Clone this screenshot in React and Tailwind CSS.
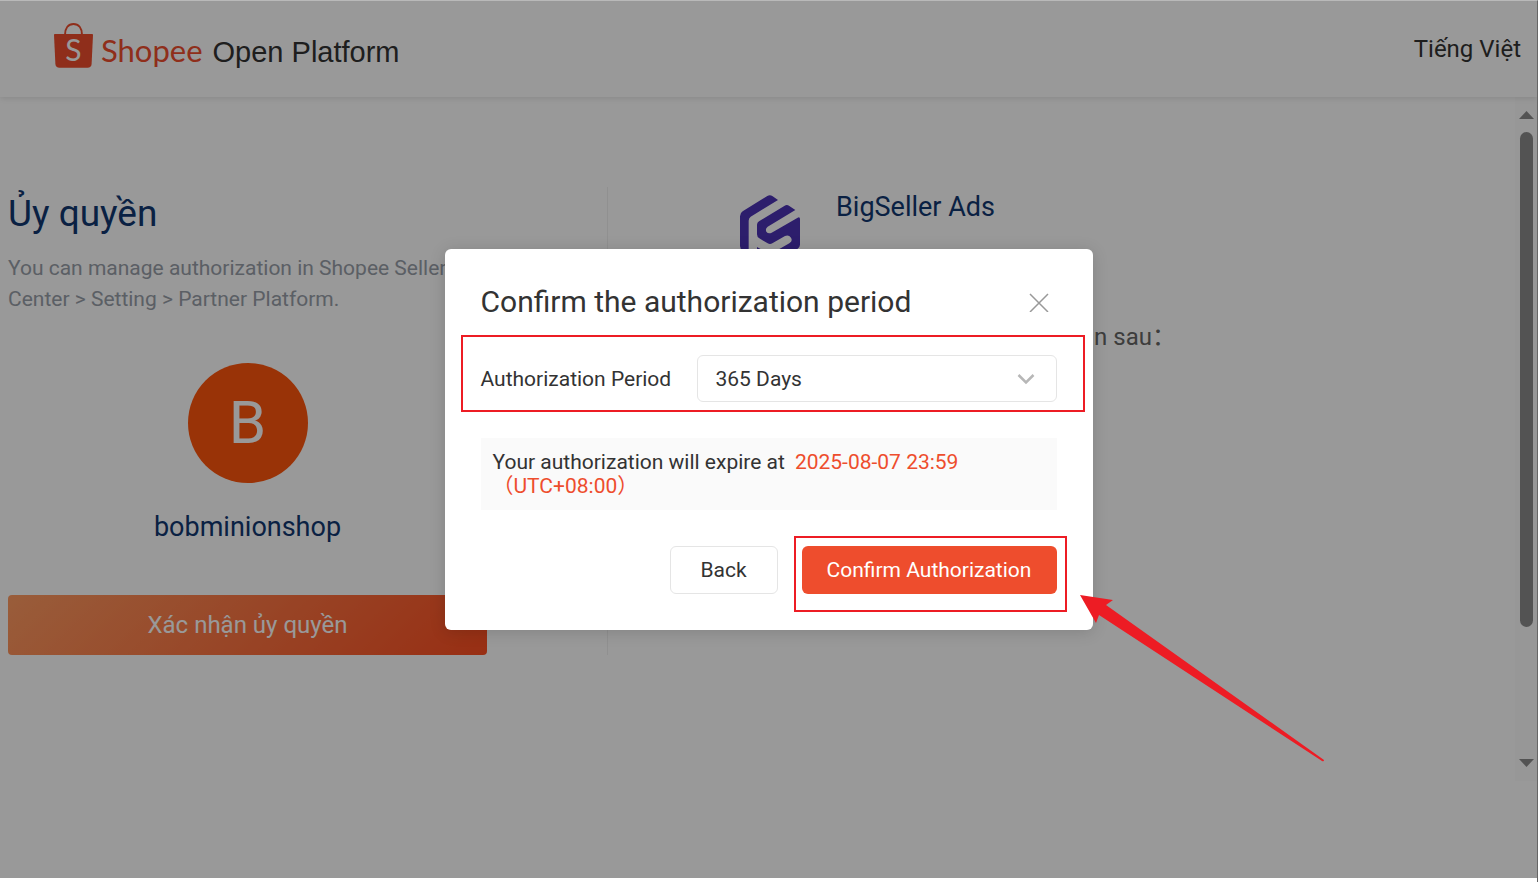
import { useState } from "react";

function ShopeeBag() {
  return (
    <svg viewBox="0 0 39 45" className="h-[45px] w-[39px]" aria-hidden="true">
      <path
        d="M11 12C11 5 14.500 1 19.500 1S28 5 28 12"
        fill="none"
        stroke="#ee4d2d"
        strokeWidth="2"
      />
      <path
        d="M0.800 11H38.200C38.700 11 39 11.400 39 11.900L37.600 41C37.400 43.500 36 44.800 33.500 44.800H5.500C3 44.800 1.600 43.500 1.400 41L0 11.900C0 11.400 0.300 11 0.800 11Z"
        fill="#ee4d2d"
      />
      <text
        x="19.500"
        y="38"
        textAnchor="middle"
        fill="#fff"
        fontSize="30"
        fontFamily="Lato, sans-serif"
      >
        S
      </text>
    </svg>
  );
}

function BigSellerLogo() {
  return (
    <svg viewBox="60 44 180 204" className="h-[68px] w-[60px]" fill="#4b32b4" aria-hidden="true">
      <path d="M142 47Q150 42 158 48L174 59L92 109Q86 113 86 121V222L68 211Q60 206 60 197V108Q60 98 68 93Z" />
      <path d="M194 76Q201 72 208 77L226 89L143 139Q135 145 139 154Q145 162 155 157L233 112Q240 109 240 116V193Q240 201 232 206L160 246Q150 250 142 245L126 236L208 189Q219 182 213 172Q206 162 195 167L157 189Q150 193 143 189L118 174Q111 170 111 162V133Q111 127 117 123Z" />
      <path d="M111 200L132 212L111 224Z" />
    </svg>
  );
}

function Scrollbar() {
  return (
    <div className="flex w-[22px] shrink-0 flex-col items-center bg-[#fcfcfc] py-[14px]">
      <svg viewBox="0 0 15 8" className="h-2 w-[15px]" fill="#8b8b8b">
        <path d="M7.500 0L15 8H0Z" />
      </svg>
      <div className="mt-[13px] w-[13px] grow-[495] rounded-full bg-[#8b8b8b]" />
      <div className="grow-[132]" />
      <svg viewBox="0 0 15 8" className="h-2 w-[15px]" fill="#8b8b8b">
        <path d="M0 0H15L7.500 8Z" />
      </svg>
    </div>
  );
}

function ConfirmModal() {
  const [period, setPeriod] = useState("365");

  return (
    <div
      role="dialog"
      aria-labelledby="modal-title"
      className="relative w-[648px] rounded-md bg-white p-9 text-[21px] leading-6 text-[#333] shadow-[0_2px_16px_rgba(0,0,0,0.15)]"
    >
      <div className="flex items-center justify-between">
        <h2 id="modal-title" className="text-[30px] leading-[34px]">
          Confirm the authorization period
        </h2>
        <button aria-label="Close" className="flex h-[34px] w-9 items-center justify-center">
          <svg viewBox="0 0 20 20" className="size-5" stroke="#999" strokeWidth="1.500">
            <path d="M1 2L19 20M19 2L1 20" />
          </svg>
        </button>
      </div>

      <div className="mt-9 flex items-center">
        <label htmlFor="period" className="w-[216px]">
          Authorization Period
        </label>
        <div className="relative flex-1">
          <select
            id="period"
            value={period}
            onChange={(e) => setPeriod(e.target.value)}
            className="block h-[47px] w-full appearance-none rounded-md border border-[#e5e5e5] bg-white px-[18px]"
          >
            <option value="365">365 Days</option>
          </select>
          <svg
            viewBox="0 0 18 12"
            className="pointer-events-none absolute top-[18px] right-[22px] h-3 w-[18px]"
            fill="none"
            stroke="#b7b7b7"
            strokeWidth="2.500"
          >
            <path d="M1.500 2L9 9.500L16.500 2" />
          </svg>
        </div>
      </div>

      <p className="mt-9 bg-[#fafafa] p-3">
        Your authorization will expire at
        <span className="ml-[10px] text-[#ee4d2d]">
          2025-08-07 23:59
          <br />
          （UTC+08:00）
        </span>
      </p>

      <div className="mt-9 flex justify-end gap-6">
        <button className="h-12 w-[108px] rounded-md border border-[#e5e5e5] bg-white">Back</button>
        <button className="h-12 w-[255px] rounded-md bg-[#ee4d2d] text-white">
          Confirm Authorization
        </button>
      </div>

      {/* highlights */}
      <div className="pointer-events-none absolute top-[86px] right-2 left-4 h-[77px] border-2 border-[#ed1c24]" />
      <div className="pointer-events-none absolute right-[26px] bottom-[18px] h-[76px] w-[273px] border-2 border-[#ed1c24]" />
      <svg
        viewBox="0 0 244 167"
        className="pointer-events-none absolute top-[346px] left-[635px] h-[167px] w-[244px]"
        fill="#ed1c24"
      >
        <path d="M0 0L33 5L26 10L244 165Q244 167 242 166L19 20L16 28Z" />
      </svg>
    </div>
  );
}

export default function App() {
  return (
    <div className="relative flex h-screen flex-col overflow-hidden border-t border-r border-t-[#b9b9b9] border-r-[#666] bg-white font-['Roboto','Noto_Sans_CJK_SC',sans-serif]">
      <header className="z-10 flex h-24 shrink-0 items-center justify-between pr-4 pl-[54px] shadow-[0_1px_6px_rgba(0,0,0,0.12)]">
        <div className="flex items-center">
          <div className="pb-2">
            <ShopeeBag />
          </div>
          <div className="ml-2 flex items-baseline gap-[10px] pt-1 leading-10">
            <span className="font-['Lato',sans-serif] text-[31px] text-[#ee4d2d]">Shopee</span>
            <span className="font-['Liberation_Sans',Arial,sans-serif] text-[29px] text-[#333]">
              Open Platform
            </span>
          </div>
        </div>
        <button className="text-2xl text-[#333]">Tiếng Việt</button>
      </header>

      <div className="mb-[101px] flex min-h-0 flex-1">
        <main className="flex flex-1 items-start pt-[90px] pl-2">
          <section className="w-[479px] shrink-0">
            <h1 className="text-[37px] leading-[54px] text-[#113771]">Ủy quyền</h1>
            <p className="mt-3 text-[21px] leading-[31px] text-[#989ea8]">
              You can manage authorization in Shopee Seller Center &gt; Setting &gt; Partner Platform.
            </p>
            <div className="mt-12 flex flex-col items-center">
              <div className="flex size-[120px] items-center justify-center rounded-full bg-[#ff550c] text-[60px] text-white">
                B
              </div>
              <p className="mt-6 text-[27px] leading-10 text-[#113771]">bobminionshop</p>
            </div>
            <button className="mt-12 h-[60px] w-full rounded bg-linear-[135deg,#ff9b62,#fd4e21] text-2xl text-white">
              Xác nhận ủy quyền
            </button>
          </section>

          <section className="ml-[120px] flex-1 self-start border-l border-[#f0f0f0] pl-[132px]">
            <div className="flex h-[468px] flex-col">
              <div className="flex gap-9 pt-2">
                <BigSellerLogo />
                <h2 className="text-[27px] leading-6 text-[#113771]">BigSeller Ads</h2>
              </div>
              <p className="mt-[60px] w-[436px] text-right text-2xl leading-7 whitespace-nowrap text-[#666]">
                Ứng dụng có thể truy cập thông tin sau：
              </p>
            </div>
          </section>
        </main>
        <Scrollbar />
      </div>

      <div className="absolute inset-x-0 top-0 bottom-1 z-20 flex items-center justify-center bg-black/40">
        <ConfirmModal />
      </div>
    </div>
  );
}
